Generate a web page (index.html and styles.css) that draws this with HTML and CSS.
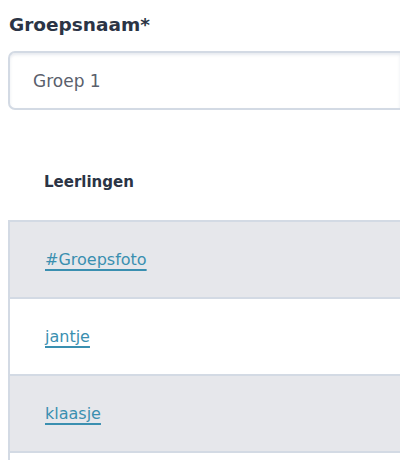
FILE: index.html
```html
<!DOCTYPE html>
<html lang="nl">
<head>
<meta charset="utf-8">
<title>Groep</title>
<link rel="stylesheet" href="styles.css">
</head>
<body>
<div class="page">
  <label class="field-label" for="naam">Groepsnaam*</label>
  <input class="text-input" id="naam" type="text" value="Groep 1">
  <table class="students">
    <thead>
      <tr><th>Leerlingen</th></tr>
    </thead>
    <tbody>
      <tr class="odd"><td><a href="#">#Groepsfoto</a></td></tr>
      <tr><td><a href="#">jantje</a></td></tr>
      <tr class="odd"><td><a href="#">klaasje</a></td></tr>
      <tr class="rest"><td></td></tr>
    </tbody>
  </table>
</div>
</body>
</html>
```
FILE: styles.css
```css
html, body {
  margin: 0;
  padding: 0;
  background: #ffffff;
}
.page {
  padding: 0 0 0 8px;
  width: 400px;
  height: 460px;
  box-sizing: border-box;
  overflow: hidden;
  font-family: "DejaVu Sans", "Noto Sans", sans-serif;
}
.field-label {
  display: block;
  padding: 14px 0 0 1px;
  height: 37px;
  box-sizing: border-box;
  font-size: 18.5px;
  line-height: 22px;
  font-weight: 700;
  color: #2b3445;
}
.text-input {
  display: block;
  margin-top: 14px;
  width: 100%;
  height: 59px;
  box-sizing: border-box;
  border: 2px solid #d3dae4;
  border-right: none;
  border-radius: 7px 0 0 7px;
  padding: 0 0 0 23px;
  font-family: inherit;
  font-size: 17px;
  color: #5a606c;
  background: #fff;
  box-shadow: inset 0 2px 3px rgba(160, 170, 190, 0.25);
  outline: none;
}
.students {
  margin-top: 0;
  width: 100%;
  border-collapse: collapse;
}
.students th {
  text-align: left;
  vertical-align: bottom;
  padding: 0 0 29px 35px;
  height: 111px;
  box-sizing: border-box;
  font-size: 15px;
  line-height: 18px;
  font-weight: 700;
  color: #2b3445;
}
.students td {
  height: 77px;
  padding: 0 0 0 35px;
  border-top: 2px solid #d3dae4;
  border-left: 2px solid #d3dae4;
  box-sizing: border-box;
  font-size: 16px;
}
.students tr.rest td {
  height: 8px;
}
.students tr.odd td {
  background: #e6e7eb;
}
.students a {
  color: #3a8fb0;
  text-decoration: underline;
  text-decoration-thickness: 1.5px;
  text-underline-offset: 4px;
}
```
